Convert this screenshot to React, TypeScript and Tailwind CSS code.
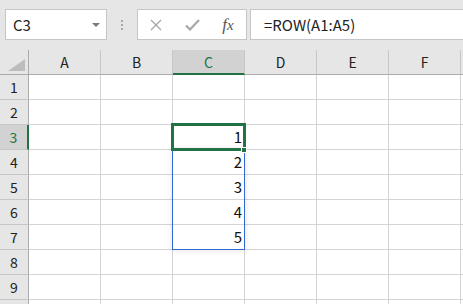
import React from 'react';

// Excel-like sheet: name box, formula bar and a grid with C3 selected
const COLS = ['A', 'B', 'C', 'D', 'E', 'F', ''];
const ROWS = [1, 2, 3, 4, 5, 6, 7, 8, 9, 0];

const VALUES: Record<string, string> = {
  C3: '1',
  C4: '2',
  C5: '3',
  C6: '4',
  C7: '5',
};

function NameBox() {
  return (
    <div className="ml-[5px] flex h-[31px] w-[102px] items-center justify-between border border-[#c6c6c6] bg-white pl-[7px] pr-[6px]">
      <span className="text-[15px] leading-none text-[#222]">C3</span>
      <svg width="8" height="4" viewBox="0 0 8 4" aria-hidden="true">
        <path d="M0 0h8L4 4z" fill="#7a7a7a" />
      </svg>
    </div>
  );
}

function FormulaBar() {
  return (
    <>
      {/* vertical grip */}
      <div className="flex h-[31px] w-[30px] flex-col items-center justify-center gap-[2px]">
        <span className="h-[2px] w-[2px] bg-[#a8a8a8]" />
        <span className="h-[2px] w-[2px] bg-[#a8a8a8]" />
        <span className="h-[2px] w-[2px] bg-[#a8a8a8]" />
      </div>

      {/* cancel / enter / fx */}
      <div className="flex h-[31px] w-[110px] items-center border border-[#c6c6c6] bg-white">
        <div className="flex w-[36px] justify-center">
          <svg width="12" height="12" viewBox="0 0 12 12" aria-hidden="true">
            <path d="M1 1l10 10M11 1L1 11" stroke="#a8a8a8" strokeWidth="1.4" />
          </svg>
        </div>
        <div className="flex w-[36px] justify-center">
          <svg width="15" height="12" viewBox="0 0 15 12" aria-hidden="true">
            <path d="M1 6.5l4 4L14 1" stroke="#a8a8a8" strokeWidth="2.2" fill="none" />
          </svg>
        </div>
        <div className="flex w-[36px] justify-center pb-[1px]">
          <span className="font-['Liberation_Serif',serif] text-[17px] italic leading-none text-[#555]">
            f<span className="text-[15px]">x</span>
          </span>
        </div>
      </div>

      {/* formula input */}
      <div className="ml-[3px] flex h-[31px] flex-1 items-center border-y border-l border-[#c6c6c6] bg-white pl-[13px]">
        <span className="text-[15px] leading-none text-[#222]">=ROW(A1:A5)</span>
      </div>
    </>
  );
}

function HeaderRow() {
  return (
    <div className="flex h-[25px]">
      {/* corner */}
      <div className="flex w-[29px] shrink-0 items-end justify-end border-b border-r border-[#ababab] bg-[#e6e6e6] pb-[3px] pr-[3px]">
        <svg width="17" height="12" viewBox="0 0 17 12" aria-hidden="true">
          <path d="M17 0v12H0z" fill="#bdbdbd" />
        </svg>
      </div>
      {COLS.map((c, i) =>
        c === 'C' ? (
          <div
            key={i}
            className="flex w-[72px] shrink-0 items-center justify-center border-b-2 border-r border-b-[#217346] border-r-[#c6c6c6] bg-[#d2d2d2] pt-[1px] text-[14px] text-[#217346]"
          >
            {c}
          </div>
        ) : (
          <div
            key={i}
            className="flex w-[72px] shrink-0 items-center justify-center border-b border-r border-b-[#ababab] border-r-[#c6c6c6] bg-[#e6e6e6] text-[14px] text-[#222]"
          >
            {c}
          </div>
        )
      )}
    </div>
  );
}

function SheetRow({ row }: { row: number }) {
  const active = row === 3;
  return (
    <div className="flex h-[25px]">
      <div
        className={
          active
            ? 'flex w-[29px] shrink-0 items-center justify-center border-b border-r-2 border-b-[#c6c6c6] border-r-[#217346] bg-[#d2d2d2] text-[14px] text-[#217346]'
            : 'flex w-[29px] shrink-0 items-center justify-center border-b border-r border-b-[#c6c6c6] border-r-[#ababab] bg-[#e6e6e6] text-[14px] text-[#222]'
        }
      >
        {row > 0 ? row : ''}
      </div>
      {COLS.map((c, i) => (
        <div
          key={i}
          className="flex w-[72px] shrink-0 items-center justify-end border-b border-r border-[#d4d4d4] pr-[2px] text-[15px] text-[#111]"
        >
          {VALUES[`${c}${row}`] ?? ''}
        </div>
      ))}
    </div>
  );
}

export default function App() {
  return (
    <div className="h-[304px] w-[463px] overflow-hidden bg-white font-['Noto_Sans_CJK_JP',sans-serif]">
      <div className="flex h-[50px] items-start bg-[#e6e6e6] pt-[9px]">
        <NameBox />
        <FormulaBar />
      </div>

      <div className="relative">
        <HeaderRow />
        {ROWS.map((r, i) => (
          <SheetRow key={i} row={r} />
        ))}

        {/* highlighted range C4:C7 */}
        <div className="absolute left-[172px] top-[99px] h-[101px] w-[73px] border border-[#3368cf] shadow-[0_0_6px_rgba(0,0,0,0.12)]" />
        {/* active cell C3 */}
        <div className="absolute left-[171px] top-[73px] h-[28px] w-[75px] border-[3px] border-[#217346]" />
        {/* fill handle */}
        <div className="absolute left-[241px] top-[97px] h-[6px] w-[6px] border border-white bg-[#217346]" />
      </div>
    </div>
  );
}
